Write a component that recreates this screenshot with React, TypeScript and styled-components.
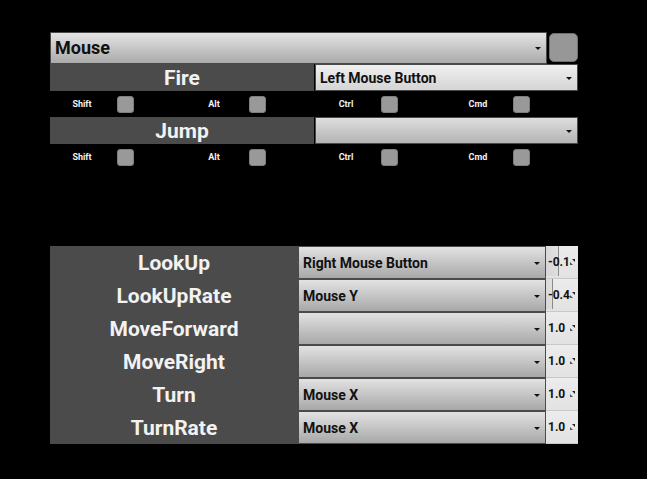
import React from "react";
import styled, { createGlobalStyle } from "styled-components";

const Global = createGlobalStyle`
  html, body { margin: 0; padding: 0; background: #000; }
  body { font-family: Roboto, "Liberation Sans", sans-serif; }
`;

const Page = styled.div`
  width: 528px;
  padding: 31px 0 0 50px;
  display: flex;
  flex-direction: column;
`;

const TopBar = styled.div`
  display: flex;
  align-items: center;
  gap: 2px;
  height: 33px;
`;

const tones = {
  main: "linear-gradient(#e4e4e4, #aaaaaa)",
  light: "linear-gradient(#f0f0f0, #d4d4d4)",
  mid: "linear-gradient(#dedede, #b4b4b4)",
  row: "linear-gradient(#e2e2e2, #a8a8a8)",
};

const Select = styled.div<{ $tone: keyof typeof tones; $size: number; $h: number }>`
  box-sizing: border-box;
  flex: 1;
  height: ${(p) => p.$h}px;
  display: flex;
  align-items: center;
  justify-content: space-between;
  padding: 0 5px 0 4px;
  background: ${(p) => tones[p.$tone]};
  border: 1px solid #4a4a4a;
  color: #111;
  font-weight: 700;
  font-size: ${(p) => p.$size}px;
`;

const Arrow = styled.span`
  width: 0;
  height: 0;
  border-left: 3px solid transparent;
  border-right: 3px solid transparent;
  border-top: 3px solid #111;
  margin-top: 2px;
`;

const SquareButton = styled.div`
  box-sizing: border-box;
  width: 29px;
  height: 29px;
  background: #979797;
  border: 1px solid #6e6e6e;
  border-radius: 5px;
`;

const ActionRow = styled.div`
  display: grid;
  grid-template-columns: 264px 1fr;
  column-gap: 1px;
  height: 27px;
`;

const Label = styled.div<{ $size: number }>`
  background: #4b4b4b;
  color: #f2f2f2;
  font-weight: 700;
  font-size: ${(p) => p.$size}px;
  display: flex;
  align-items: center;
  justify-content: center;
`;

const ModRow = styled.div`
  display: grid;
  grid-template-columns: repeat(4, 132px);
  height: 26px;
  align-items: center;
`;

const ModItem = styled.div`
  display: grid;
  grid-template-columns: 64px 17px;
  column-gap: 3px;
  align-items: center;
`;

const ModLabel = styled.span`
  color: #f2f2f2;
  font-size: 9px;
  font-weight: 700;
  text-align: center;
`;

const Check = styled.div`
  box-sizing: border-box;
  width: 17px;
  height: 17px;
  background: #999;
  border: 1px solid #7e7e7e;
  border-radius: 3px;
`;

const Table = styled.div`
  margin-top: 76px;
  display: grid;
  grid-template-columns: 248px 248px 32px;
  grid-auto-rows: 33px;
`;

const NumberField = styled.div`
  position: relative;
  box-sizing: border-box;
  background: linear-gradient(#ececec, #e2e2e2);
  border-bottom: 1px solid #c8c8c8;
  display: flex;
  align-items: center;
  padding-left: 2px;
  font-size: 12px;
  font-weight: 700;
  color: #111;
  overflow: hidden;
`;

const Knob = styled.div`
  position: absolute;
  left: 0;
  top: 0;
  height: 30px;
  box-sizing: border-box;
  border-right: 1px solid #8a8a8a;
  background: linear-gradient(90deg, rgba(200, 200, 200, 0.5), rgba(215, 215, 215, 0.5));
`;

const NumText = styled.span`
  position: relative;
`;

const Grip = styled.svg`
  position: absolute;
  right: 3px;
  top: 50%;
  margin-top: -3px;
`;

const modifiers = ["Shift", "Alt", "Ctrl", "Cmd"];

const Modifiers = () => (
  <ModRow>
    {modifiers.map((m) => (
      <ModItem key={m}>
        <ModLabel>{m}</ModLabel>
        <Check />
      </ModItem>
    ))}
  </ModRow>
);

const axes = [
  { name: "LookUp", input: "Right Mouse Button", value: "-0.1", knob: 13 },
  { name: "LookUpRate", input: "Mouse Y", value: "-0.4", knob: 7 },
  { name: "MoveForward", input: "", value: "1.0" },
  { name: "MoveRight", input: "", value: "1.0" },
  { name: "Turn", input: "Mouse X", value: "1.0" },
  { name: "TurnRate", input: "Mouse X", value: "1.0" },
];

export default function App() {
  return (
    <>
      <Global />
      <Page>
        <TopBar>
          <Select $tone="main" $size={18} $h={32}>
            <span>Mouse</span>
            <Arrow />
          </Select>
          <SquareButton />
        </TopBar>
        <ActionRow>
          <Label $size={21}>Fire</Label>
          <Select $tone="light" $size={14} $h={27}>
            <span>Left Mouse Button</span>
            <Arrow />
          </Select>
        </ActionRow>
        <Modifiers />
        <ActionRow>
          <Label $size={21}>Jump</Label>
          <Select $tone="mid" $size={14} $h={27}>
            <span></span>
            <Arrow />
          </Select>
        </ActionRow>
        <Modifiers />
        <Table>
          {axes.map((a) => (
            <React.Fragment key={a.name}>
              <Label $size={21}>{a.name}</Label>
              <Select $tone="row" $size={14} $h={33}>
                <span>{a.input}</span>
                <Arrow />
              </Select>
              <NumberField>
                {a.knob ? <Knob style={{ width: a.knob }} /> : null}
                <NumText>{a.value}</NumText>
                <Grip width="5" height="6" viewBox="0 0 5 6">
                  <path d="M5 0 L5 3 L2 0 Z" fill="#222" />
                  <path d="M0 6 L0 3 L3 6 Z" fill="#555" />
                </Grip>
              </NumberField>
            </React.Fragment>
          ))}
        </Table>
      </Page>
    </>
  );
}
